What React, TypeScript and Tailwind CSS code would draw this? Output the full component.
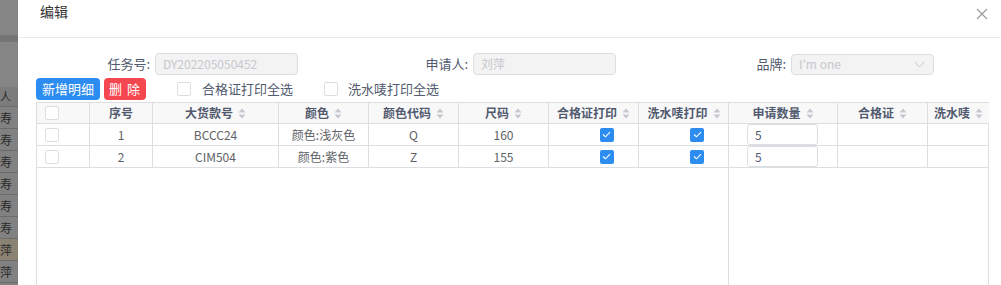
import React from 'react'

const font = { fontFamily: '"Noto Sans CJK SC", "Liberation Sans", sans-serif' }

interface Row {
  id: number
  code: string
  color: string
  colorCode: string
  size: string
  qty: string
}

const rows: Row[] = [
  { id: 1, code: 'BCCC24', color: '颜色:浅灰色', colorCode: 'Q', size: '160', qty: '5' },
  { id: 2, code: 'CIM504', color: '颜色:紫色', colorCode: 'Z', size: '155', qty: '5' },
]

function SortIcon() {
  return (
    <svg width="8" height="11" viewBox="0 0 8 11" className="ml-[5px] shrink-0">
      <path d="M4 0.5 L7.5 4.5 H0.5 Z" fill="#c5c8ce" />
      <path d="M4 10.5 L7.5 6.5 H0.5 Z" fill="#c5c8ce" />
    </svg>
  )
}

function Box({ checked = false }: { checked?: boolean }) {
  if (checked) {
    return (
      <span className="flex h-[14px] w-[14px] items-center justify-center rounded-[2px] bg-[#2d8cf0]">
        <svg width="9" height="7" viewBox="0 0 9 7">
          <path d="M1 3.5 L3.5 5.8 L8 1.2" stroke="#fff" strokeWidth="1.1" fill="none" />
        </svg>
      </span>
    )
  }
  return <span className="block h-[14px] w-[14px] rounded-[2px] border border-[#dcdee2] bg-white" />
}

function Th({ w, label, sort = true, last = false }: { w: number; label: string; sort?: boolean; last?: boolean }) {
  return (
    <div
      style={{ width: w }}
      className={`flex h-full shrink-0 items-center justify-center font-semibold text-[#515a6e] ${last ? '' : 'border-r border-[#dcdee2]'}`}
    >
      {label}
      {sort && <SortIcon />}
    </div>
  )
}

function Td({ w, children, last = false, className = '' }: { w: number; children?: React.ReactNode; last?: boolean; className?: string }) {
  return (
    <div
      style={{ width: w }}
      className={`flex h-full shrink-0 items-center justify-center ${last ? '' : 'border-r border-[#dcdee2]'} ${className}`}
    >
      {children}
    </div>
  )
}

// the list page that lies under the modal's dimmed backdrop
function Backdrop() {
  const lines = ['寿', '寿', '寿', '寿', '寿', '寿', '萍', '萍']
  return (
    <div className="flex w-[18px] shrink-0 flex-col overflow-hidden bg-[#818181] text-[12px] text-[#2a2a2a]">
      <div className="h-[35px] bg-[#858585]" />
      <div className="h-[7px] bg-[#747474]" />
      <div className="h-[45px] bg-[#858585]" />
      <div className="flex h-[20px] items-center border-b border-[#6c6c6c] bg-[#7c7c7c] text-[11px] leading-none">
        人
      </div>
      {lines.map((t, i) => (
        <div
          key={i}
          className={`flex h-[22px] shrink-0 items-center border-b border-[#6c6c6c] leading-none ${i === 6 ? 'bg-[#8a8273]' : ''}`}
        >
          {t}
        </div>
      ))}
    </div>
  )
}

export default function App() {
  return (
    <div style={font} className="flex h-[285px] w-[1001px] overflow-hidden bg-white">
      <Backdrop />
      <div className="flex min-w-0 flex-1 flex-col">
        <div className="flex h-[38px] shrink-0 items-start justify-between border-b border-[#e8eaec] pl-[22px] pr-[13px]">
          <span className="mt-[1px] text-[14px] text-[#333]">编辑</span>
          <svg width="12" height="12" viewBox="0 0 12 12" className="mt-[8px]">
            <path d="M1 1 L11 11 M11 1 L1 11" stroke="#999" strokeWidth="1.1" />
          </svg>
        </div>

        <div className="flex flex-col pl-[18px]">
          <div className="mt-[15px] grid h-[22px] grid-cols-[318px_318px_318px] text-[13px] text-[#515a6e]">
            <div className="flex items-center">
              <span className="w-[119px] pr-[5px] text-right">任务号:</span>
              <span className="flex h-[22px] w-[143px] items-center rounded-[4px] border border-[#dcdee2] bg-[#f3f3f3] px-[7px] text-[12px] text-[#c5c8ce]">
                DY202205050452
              </span>
            </div>
            <div className="flex items-center">
              <span className="w-[119px] pr-[5px] text-right">申请人:</span>
              <span className="flex h-[22px] w-[143px] items-center rounded-[4px] border border-[#dcdee2] bg-[#f3f3f3] px-[7px] text-[12px] text-[#c5c8ce]">
                刘萍
              </span>
            </div>
            <div className="flex items-center">
              <span className="w-[119px] pr-[5px] text-right">品牌:</span>
              <span className="flex h-[21px] w-[143px] items-center justify-between rounded-[4px] border border-[#dcdee2] bg-[#f3f3f3] pl-[7px] pr-[8px] text-[12px] text-[#c5c8ce]">
                I'm one
                <svg width="11" height="7" viewBox="0 0 11 7">
                  <path d="M0.5 0.8 L5.5 6 L10.5 0.8" stroke="#c5c8ce" strokeWidth="1" fill="none" />
                </svg>
              </span>
            </div>
          </div>

          <div className="mt-[3px] flex h-[22px] items-center text-[13px]">
            <button className="flex h-[22px] w-[64px] items-center justify-center rounded-[4px] bg-[#2d8cf0] text-white">
              新增明细
            </button>
            <button className="ml-[4px] flex h-[22px] w-[42px] items-center justify-center rounded-[4px] bg-[#f5474f] tracking-[1px] text-white">
              删 除
            </button>
            <span className="ml-[31px]"><Box /></span>
            <span className="ml-[11px] text-[#515a6e]">合格证打印全选</span>
            <span className="ml-[31px]"><Box /></span>
            <span className="ml-[10px] text-[#515a6e]">洗水唛打印全选</span>
          </div>

          <div className="mt-[2px] flex h-[300px] w-[953px] border border-[#dcdee2] text-[12px] text-[#515a6e]">
            <div className="flex w-[692px] shrink-0 flex-col border-r border-[#dcdee2]">
              <div className="flex h-[21px] border-b border-[#dcdee2] bg-[#f8f8f9]">
                <Td w={53} className="!justify-start pl-[8px]"><Box /></Td>
                <Th w={63} label="序号" sort={false} />
                <Th w={126} label="大货款号" />
                <Th w={90} label="颜色" />
                <Th w={90} label="颜色代码" />
                <Th w={90} label="尺码" />
                <Th w={90} label="合格证打印" />
                <Th w={90} label="洗水唛打印" last />
              </div>
              {rows.map((r) => (
                <div key={r.id} className="flex h-[22px] border-b border-[#dcdee2] text-[#606266]">
                  <Td w={53} className="!justify-start pl-[8px]"><Box /></Td>
                  <Td w={63}>{r.id}</Td>
                  <Td w={126}>{r.code}</Td>
                  <Td w={90}>{r.color}</Td>
                  <Td w={90}>{r.colorCode}</Td>
                  <Td w={90}>{r.size}</Td>
                  <Td w={90} className="pl-[26px]"><Box checked /></Td>
                  <Td w={90} className="pl-[26px]" last><Box checked /></Td>
                </div>
              ))}
            </div>
            <div className="flex flex-1 flex-col">
              <div className="flex h-[21px] border-b border-[#dcdee2] bg-[#f8f8f9]">
                <Th w={109} label="申请数量" />
                <Th w={90} label="合格证" />
                <Th w={61} label="洗水唛" last />
              </div>
              {rows.map((r) => (
                <div key={r.id} className="flex h-[22px] border-b border-[#dcdee2] text-[#606266]">
                  <Td w={109} className="!justify-start pl-[18px]">
                    <span className="flex h-[21px] w-[71px] items-center rounded-[3px] border border-[#dcdee2] bg-white pl-[7px] text-[12px] text-[#515a6e]">
                      {r.qty}
                    </span>
                  </Td>
                  <Td w={90} />
                  <Td w={61} last />
                </div>
              ))}
            </div>
          </div>
        </div>
      </div>
    </div>
  )
}
